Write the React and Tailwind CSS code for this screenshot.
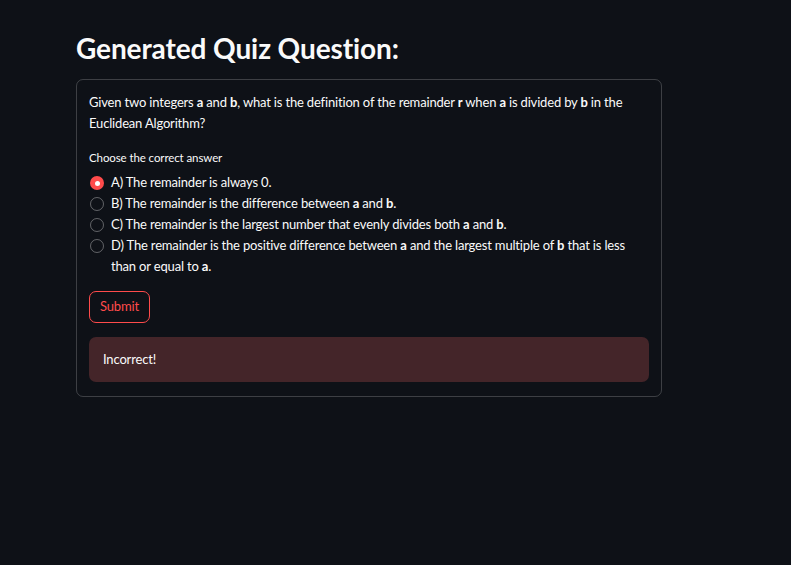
export default function App() {
  const opts = [
    { k: 'A', el: <>A) The remainder is always 0.</>, checked: true },
    { k: 'B', el: <>B) The remainder is the difference between <b>a</b> and <b>b</b>.</> },
    { k: 'C', el: <>C) The remainder is the largest number that evenly divides both <b>a</b> and <b>b</b>.</> },
    { k: 'D', el: <>D) The remainder is the positive difference between <b>a</b> and the largest multiple of <b>b</b> that is less than or equal to <b>a</b>.</> },
  ];
  return (
    <div className="min-h-[565px] w-full bg-[#0e1117] text-[#fafafa] font-['Lato',sans-serif]">
      <div className="pl-[76px] pt-[30px] w-[662px]">
        <h1 className="text-[28px] font-bold leading-[36px] tracking-[-0.1px]">Generated Quiz Question:</h1>
        <div className="mt-[13px] border border-[rgba(250,250,250,0.2)] rounded-[7px] px-[12px] pt-[12px] pb-[14px] text-[13px] tracking-[-0.17px]">
          <p className="leading-[21px]">
            Given two integers <b>a</b> and <b>b</b>, what is the definition of the remainder <b>r</b> when <b>a</b> is divided by <b>b</b> in the Euclidean Algorithm?
          </p>
          <div className="mt-[16px] text-[11.5px] leading-[16px] tracking-[-0.1px]">Choose the correct answer</div>
          <div className="mt-[6px] flex flex-col">
            {opts.map((o) => (
              <div key={o.k} className="flex items-start leading-[21px]">
                <span className="mt-[4px] ml-[1px] w-[14px] h-[14px] shrink-0 rounded-full flex items-center justify-center border border-[rgba(250,250,250,0.35)] data-[c=true]:border-0 data-[c=true]:bg-[#ff4b4b]" data-c={o.checked ? 'true' : 'false'}>
                  {o.checked && <span className="w-[5px] h-[5px] rounded-full bg-white" />}
                </span>
                <span className="ml-[7px] pr-[4px]">{o.el}</span>
              </div>
            ))}
          </div>
          <button className="mt-[14px] h-[32px] px-[10px] rounded-[7px] border border-[#ff4b4b] text-[#ff4b4b] text-[13px]">Submit</button>
          <div className="mt-[14px] h-[45px] rounded-[7px] bg-[#442529] flex items-center px-[14px] text-[#fafafa]">Incorrect!</div>
        </div>
      </div>
    </div>
  );
}
